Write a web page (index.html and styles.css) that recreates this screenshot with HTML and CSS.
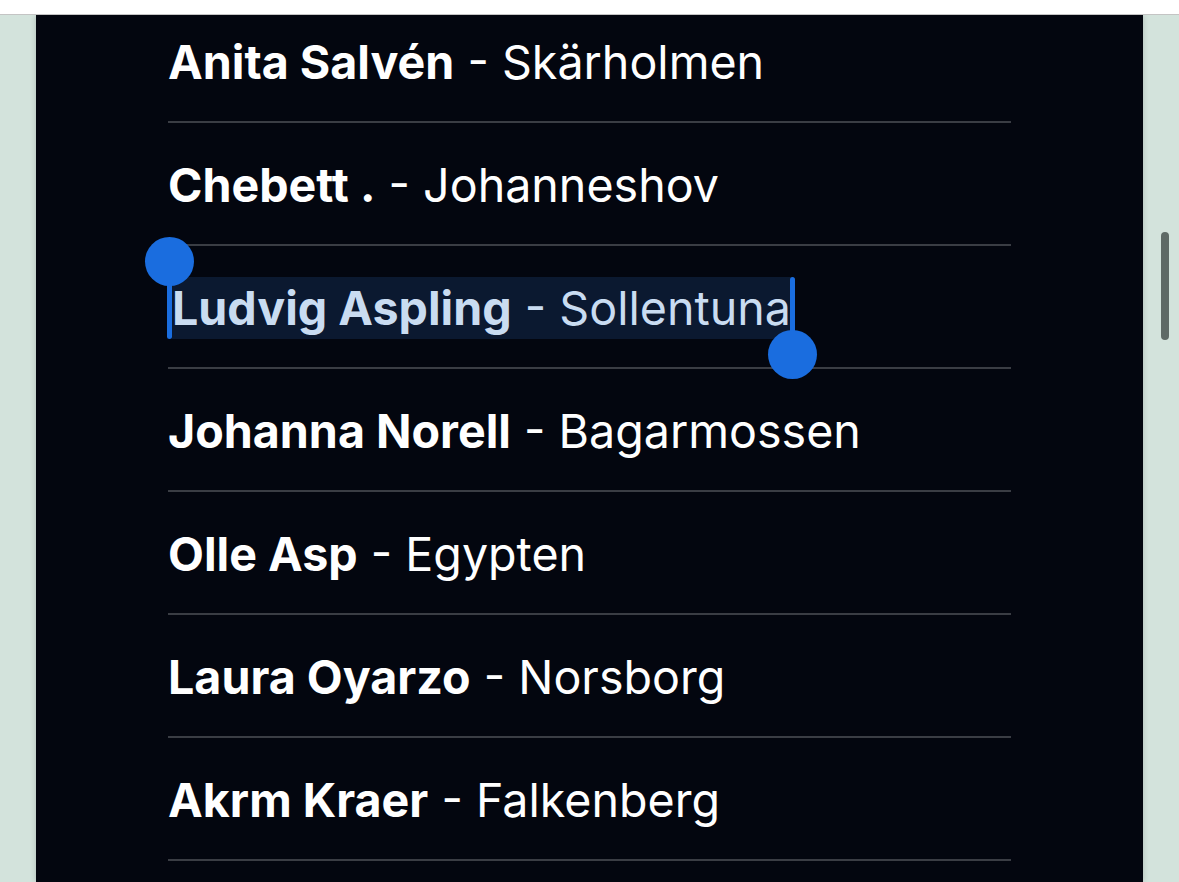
FILE: index.html
```html
<!DOCTYPE html>
<html lang="sv">
<head>
<meta charset="utf-8">
<title>Lista</title>
<link rel="stylesheet" href="styles.css">
</head>
<body>
<div class="topbar"></div>
<div class="stage">
  <main class="panel">
    <ul class="list">
      <li class="row"><span class="line"><b>Anita Salvén</b> - Skärholmen</span></li>
      <li class="row"><span class="line"><b>Chebett .</b> - Johanneshov</span></li>
      <li class="row"><span class="line selected"><b>Ludvig Aspling</b> - Sollentuna<i class="handle start"></i><i class="handle end"></i></span></li>
      <li class="row"><span class="line"><b>Johanna Norell</b> - Bagarmossen</span></li>
      <li class="row"><span class="line"><b>Olle Asp</b> - Egypten</span></li>
      <li class="row"><span class="line"><b>Laura Oyarzo</b> - Norsborg</span></li>
      <li class="row"><span class="line"><b>Akrm Kraer</b> - Falkenberg</span></li>
    </ul>
  </main>
  <div class="scrolltrack"><div class="thumb"></div></div>
</div>
</body>
</html>
```
FILE: styles.css
```css
html, body {
  margin: 0;
  padding: 0;
  height: 100%;
  overflow: hidden;
}
body {
  background: #d3e3dc;
  font-family: Inter, "Liberation Sans", sans-serif;
}
.topbar {
  height: 14px;
  background: #ffffff;
  border-bottom: 1px solid #c4c4c4;
  position: relative;
  z-index: 2;
}
.stage {
  display: flex;
  height: calc(100% - 15px);
}
.panel {
  margin-left: 36px;
  width: 1107px;
  background: #03060f;
  box-shadow: 0 0 6px rgba(0, 0, 0, 0.18);
  overflow: hidden;
}
.list {
  list-style: none;
  margin: -15px 132px 0 132px;
  padding: 0;
}
.row {
  height: 119px;
  padding-top: 2px;
  border-bottom: 2px solid #3a3d44;
  display: flex;
  align-items: center;
  color: #ffffff;
  font-size: 46.6px;
}
.line b {
  font-weight: 700;
}
.line {
  font-weight: 400;
  white-space: nowrap;
}
.selected {
  position: relative;
  background: #0b1930;
  color: #c9dcf1;
  padding: 3px 2px 3px 0;
  margin-left: 4px;
}
.handle {
  position: absolute;
  width: 5px;
  background: #1a6ddf;
  border-radius: 3px;
  top: 0;
  bottom: 0;
}
.handle::after {
  content: "";
  position: absolute;
  width: 49px;
  height: 49px;
  border-radius: 50%;
  background: #1a6ddf;
  left: -22px;
}
.handle.start {
  left: -5px;
}
.handle.start::after {
  top: -40px;
}
.handle.end {
  right: -2px;
}
.handle.end::after {
  top: calc(100% - 9px);
}
.scrolltrack {
  flex: 1;
  position: relative;
}
.thumb {
  position: absolute;
  left: 18px;
  top: 217px;
  width: 8px;
  height: 108px;
  border-radius: 4px;
  background: #5e6a66;
}
```
